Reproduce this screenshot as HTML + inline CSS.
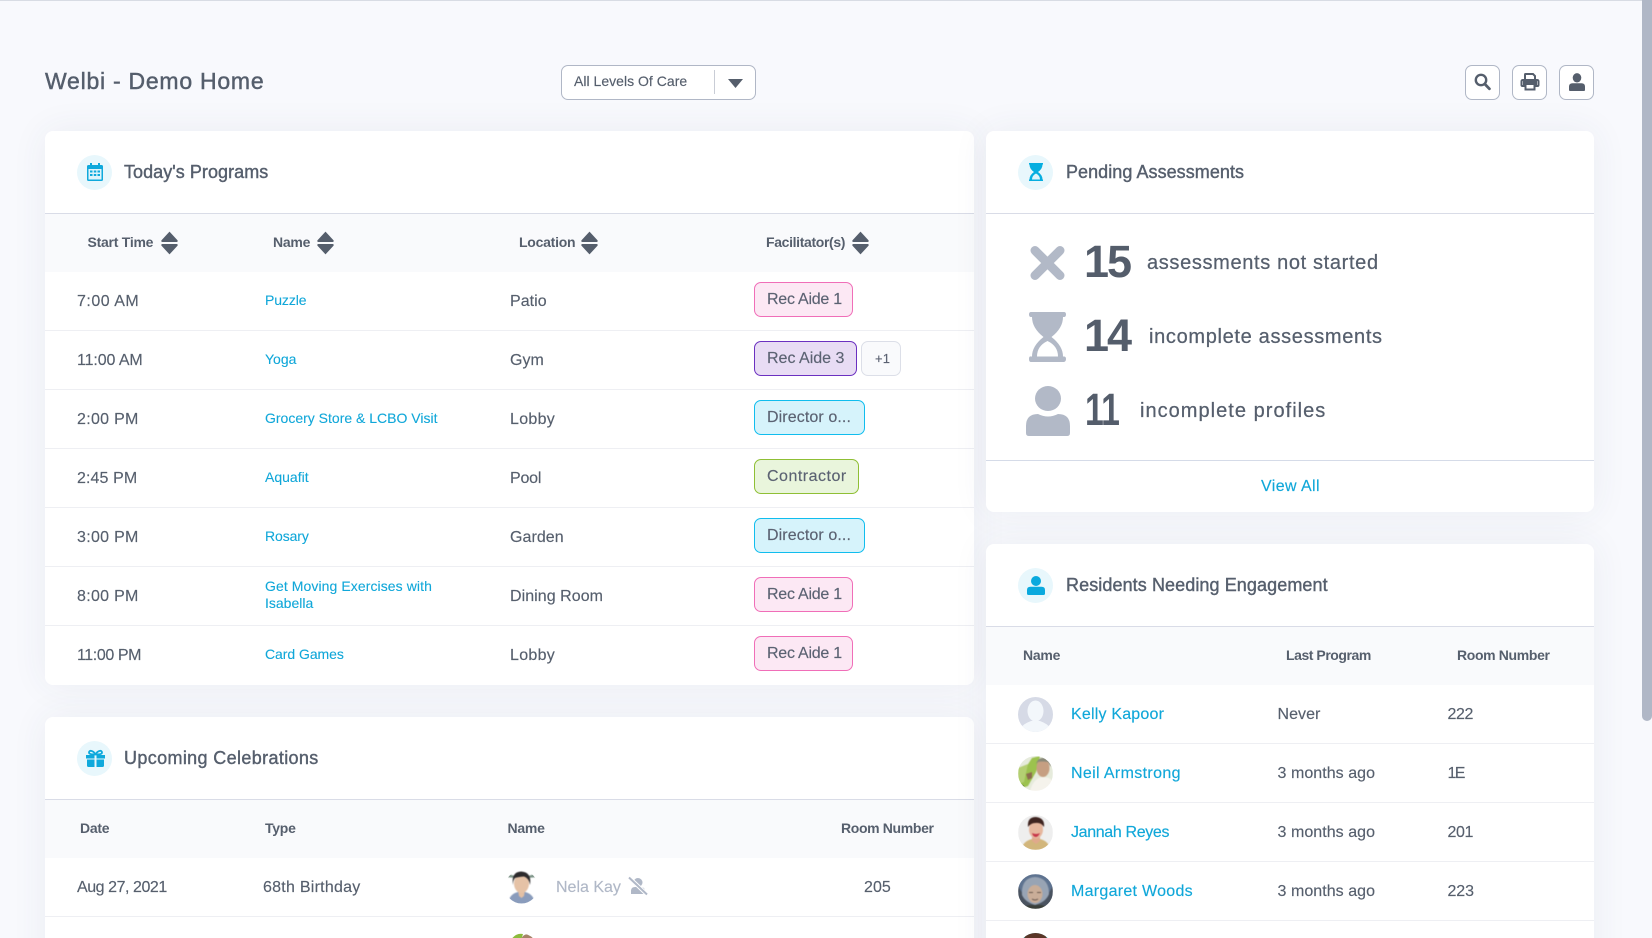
<!DOCTYPE html>
<html lang="en"><head><meta charset="utf-8"><title>Welbi - Demo Home</title>
<style>
html,body{margin:0;padding:0;width:1652px;height:938px;overflow:hidden;background:#f8f9fd}
body{position:relative;font-family:"Liberation Sans",sans-serif;color:#555e6c}
.top{position:absolute;left:0;top:0;width:1652px;height:1px;background:#d8dce4}
.sb{position:absolute;left:1642px;top:0;width:10px;height:721px;background:#b0b7c6;border-radius:0 0 5px 5px}
.card{position:absolute;background:#fff;border-radius:8px;box-shadow:0 0 36px rgba(60,70,100,.07);overflow:hidden}
.hb{position:absolute;left:0;right:0;height:1px;background:#d9dce7}
.th{position:absolute;left:0;right:0;background:#f9fafc}
.rb{position:absolute;left:0;right:0;height:1px;background:#eeeff3}
.t{position:absolute;white-space:nowrap;line-height:20px;height:20px}
.h{font-size:18px;letter-spacing:.05px;color:#565f6d;-webkit-text-stroke:.4px #565f6d}
.c{font-size:14px;font-weight:700;letter-spacing:-.25px;color:#565f6d}
.r{font-size:16px;letter-spacing:.05px;color:#565f6d;-webkit-text-stroke:.15px #565f6d}
.l{font-size:14px;letter-spacing:0;color:#10a7d9;-webkit-text-stroke:.1px #10a7d9}
.n{font-size:16px;letter-spacing:.2px;color:#10a7d9;-webkit-text-stroke:.15px #10a7d9}
.s{font-size:23px;letter-spacing:.75px;color:#555e6c;-webkit-text-stroke:.45px #555e6c}
.big{font-size:45px;font-weight:700;letter-spacing:-2px;line-height:50px;height:50px;color:#545d6b}
.lab{font-size:20px;letter-spacing:.65px;color:#565f6d;-webkit-text-stroke:.25px #565f6d}
.pill{position:absolute;box-sizing:border-box;height:35px;border-radius:7px;border:1.5px solid;font-size:16px;line-height:33px;padding-left:12px;letter-spacing:.1px;color:#5b6272;white-space:nowrap;-webkit-text-stroke:.15px #5b6272}
.pk{background:#fce8f4;border-color:#f06eb8;width:99px;letter-spacing:-.25px}
.pu{background:#e8dcf4;border-color:#6b30c0;width:103px;letter-spacing:0}
.bl{background:#d6f3fb;border-color:#10bdee;width:111px}
.gr{background:#e9f5dc;border-color:#8fbf35;width:105px;letter-spacing:.5px}
.ctr{background:#f9fafc;border-color:#dcdfe8;width:40px;padding-left:13px;font-size:13px}
.btn{position:absolute;top:65px;width:33px;height:33px;background:#fff;border:1px solid #b0b7c6;border-radius:7px}
.sel{position:absolute;left:561px;top:65px;width:193px;height:33px;background:#fff;border:1px solid #b0b7c6;border-radius:7px}
svg{position:absolute;display:block;overflow:visible}
.ph{filter:blur(.45px)}
</style></head><body>
<svg width="0" height="0" style="position:absolute"><defs>
<symbol id="sort" viewBox="0 0 17 24"><path d="M8.5.6 16.6 9.4Q17 11 15.6 11H1.4Q0 11 .4 9.4ZM8.5 23.4.4 14.6Q0 13 1.4 13H15.6Q17 13 16.6 14.6Z" fill="#555e6c"/></symbol>
<clipPath id="cc"><circle cx="17.5" cy="17.5" r="17.5"/></clipPath>
<clipPath id="cn"><circle cx="16.5" cy="17" r="16.5"/></clipPath>
</defs></svg>
<div class="top"></div><div class="sb"></div>

<div class="t s" style="left:45px;top:70.5px">Welbi - Demo Home</div>
<div class="sel"></div>
<div class="t" style="left:574px;top:71px;font-size:14px;letter-spacing:.02px;color:#555e6c;-webkit-text-stroke:.15px #555e6c">All Levels Of Care</div>
<div style="position:absolute;left:714px;top:70px;width:1px;height:24px;background:#c9cdd6"></div>
<svg style="left:728px;top:79px" width="15" height="9" viewBox="0 0 15 9"><path d="M0 0H15L7.5 9Z" fill="#555e6c"/></svg>

<div class="btn" style="left:1465px"><svg style="left:8px;top:7px" width="17" height="18" viewBox="0 0 17 18"><circle cx="7" cy="7" r="5.2" fill="none" stroke="#555e6c" stroke-width="2.4"/><path d="M10.8 11 15.4 15.8" stroke="#555e6c" stroke-width="2.8" stroke-linecap="round"/></svg></div>
<div class="btn" style="left:1512px"><svg style="left:7.5px;top:7px" width="18" height="18" viewBox="0 0 18 18"><path d="M4 7V1.5Q4 1 4.5 1H12L14 3V7M4 13H1.5Q.5 13 .5 12V8.5Q.5 7 2 7H16Q17.5 7 17.5 8.5V12Q17.5 13 16.5 13H14" fill="none" stroke="#555e6c" stroke-width="2"/><path d="M2 7.5H16V12.5H14V10.5H4V12.5H2Z" fill="#555e6c"/><rect x="4.5" y="11" width="9" height="5.5" fill="none" stroke="#555e6c" stroke-width="2"/></svg></div>
<div class="btn" style="left:1559px"><svg style="left:9px;top:7px" width="16" height="19" viewBox="0 0 16 19"><ellipse cx="8" cy="4.8" rx="4.3" ry="4.7" fill="#555e6c"/><path d="M0 17V13.5Q0 10.2 3.5 10.2H12.5Q16 10.2 16 13.5V17Q16 18 15 18H1Q0 18 0 17Z" fill="#555e6c"/></svg></div>

<!-- Today's Programs -->
<div class="card" style="left:45px;top:131px;width:929px;height:554px">
<div class="hb" style="top:82px"></div>
<div class="th" style="top:83px;height:58px"></div>
<div class="rb" style="top:199px"></div><div class="rb" style="top:258px"></div><div class="rb" style="top:317px"></div><div class="rb" style="top:376px"></div><div class="rb" style="top:435px"></div><div class="rb" style="top:494px"></div>
</div>
<svg style="left:77px;top:155px" width="35" height="35"><circle cx="17.5" cy="17.5" r="17.5" fill="#e8f7fc"/></svg>
<svg style="left:87px;top:163px" width="16" height="18" viewBox="0 0 16 18"><path d="M3 0H5V2H11V0H13V2H14.5Q16 2 16 3.5V16.5Q16 18 14.5 18H1.5Q0 18 0 16.5V3.5Q0 2 1.5 2H3Z" fill="#0fa9dc"/><rect x="1.5" y="6" width="13" height="10.5" fill="#dff4fb"/><g fill="#0fa9dc"><rect x="3" y="7.5" width="2.5" height="2"/><rect x="6.8" y="7.5" width="2.5" height="2"/><rect x="10.5" y="7.5" width="2.5" height="2"/><rect x="3" y="11" width="2.5" height="2"/><rect x="6.8" y="11" width="2.5" height="2"/><rect x="10.5" y="11" width="2.5" height="2"/></g></svg>
<div class="t h" style="left:124px;top:162px">Today's Programs</div>

<div class="t c" style="left:87.5px;top:232px">Start Time</div><svg style="left:161px;top:231px" width="17" height="24"><use href="#sort"/></svg>
<div class="t c" style="left:273px;top:232px">Name</div><svg style="left:317px;top:231px" width="17" height="24"><use href="#sort"/></svg>
<div class="t c" style="left:519px;top:232px">Location</div><svg style="left:581px;top:231px" width="17" height="24"><use href="#sort"/></svg>
<div class="t c" style="left:766px;top:232px;letter-spacing:-.35px">Facilitator(s)</div><svg style="left:852px;top:231px" width="17" height="24"><use href="#sort"/></svg>

<div class="t r" style="left:77px;top:292px;letter-spacing:.5px">7:00 AM</div><a class="t l" style="left:265px;top:290px;letter-spacing:-.1px">Puzzle</a><div class="t r" style="left:510px;top:292px">Patio</div><div class="pill pk" style="left:754px;top:282px">Rec Aide 1</div>
<div class="t r" style="left:77px;top:351px;letter-spacing:-.1px">11:00 AM</div><a class="t l" style="left:265px;top:349px">Yoga</a><div class="t r" style="left:510px;top:351px">Gym</div><div class="pill pu" style="left:754px;top:341px">Rec Aide 3</div><div class="pill ctr" style="left:861px;top:341px">+1</div>
<div class="t r" style="left:77px;top:410px;letter-spacing:.3px">2:00 PM</div><a class="t l" style="left:265px;top:408px">Grocery Store &amp; LCBO Visit</a><div class="t r" style="left:510px;top:410px;letter-spacing:.3px">Lobby</div><div class="pill bl" style="left:754px;top:400px">Director o...</div>
<div class="t r" style="left:77px;top:469px;letter-spacing:.1px">2:45 PM</div><a class="t l" style="left:265px;top:467px">Aquafit</a><div class="t r" style="left:510px;top:469px;letter-spacing:-.2px">Pool</div><div class="pill gr" style="left:754px;top:459px">Contractor</div>
<div class="t r" style="left:77px;top:528px;letter-spacing:.3px">3:00 PM</div><a class="t l" style="left:265px;top:526px;letter-spacing:-.1px">Rosary</a><div class="t r" style="left:510px;top:528px">Garden</div><div class="pill bl" style="left:754px;top:518px">Director o...</div>
<div class="t r" style="left:77px;top:587px;letter-spacing:.3px">8:00 PM</div><a class="t l" style="left:265px;top:576px;letter-spacing:.08px">Get Moving Exercises with</a><a class="t l" style="left:265px;top:593px">Isabella</a><div class="t r" style="left:510px;top:587px">Dining Room</div><div class="pill pk" style="left:754px;top:577px">Rec Aide 1</div>
<div class="t r" style="left:77px;top:646px;letter-spacing:-.4px">11:00 PM</div><a class="t l" style="left:265px;top:644px;letter-spacing:-.05px">Card Games</a><div class="t r" style="left:510px;top:646px;letter-spacing:.3px">Lobby</div><div class="pill pk" style="left:754px;top:636px">Rec Aide 1</div>

<!-- Upcoming Celebrations -->
<div class="card" style="left:45px;top:717px;width:929px;height:260px">
<div class="hb" style="top:82px"></div>
<div class="th" style="top:83px;height:58px"></div>
<div class="rb" style="top:199px"></div>
</div>
<svg style="left:77px;top:741px" width="35" height="35"><circle cx="17.5" cy="17.5" r="17.5" fill="#e8f7fc"/></svg>
<svg style="left:86px;top:750px" width="19" height="17" viewBox="0 0 19 17"><path d="M9.5 4.5C7 0 3 0 3 2.5 3 4 5 4.5 9.5 4.5ZM9.5 4.5C12 0 16 0 16 2.5 16 4 14 4.5 9.5 4.5Z" fill="none" stroke="#0fa9dc" stroke-width="1.8"/><path d="M0 5H8.5V8.5H0ZM10.5 5H19V8.5H10.5ZM1 9.5H8.5V17H2.5Q1 17 1 15.5ZM10.5 9.5H18V15.5Q18 17 16.5 17H10.5Z" fill="#0fa9dc"/></svg>
<div class="t h" style="left:124px;top:748px;letter-spacing:.36px">Upcoming Celebrations</div>
<div class="t c" style="left:80px;top:818px">Date</div><div class="t c" style="left:265px;top:818px">Type</div><div class="t c" style="left:507.5px;top:818px">Name</div><div class="t c" style="left:841px;top:818px;letter-spacing:-.35px">Room Number</div>
<div class="t r" style="left:77px;top:878px;letter-spacing:-.45px">Aug 27, 2021</div><div class="t r" style="left:263px;top:878px;letter-spacing:.25px">68th Birthday</div><div class="t r" style="left:864px;top:878px">205</div>
<svg style="left:505px;top:870px" width="33" height="34"><g clip-path="url(#cn)"><g class="ph"><rect width="33" height="34" fill="#fff"/><path d="M0 3 10 6 10 8 0 7ZM33 3 23 6 23 8 33 7Z" fill="#7d9488"/><path d="M3 34Q4 24 13 22L20 22Q29 24 30 34Z" fill="#8a9cbc"/><path d="M13 20H20L19 26 16.5 28 14 26Z" fill="#e2bfa4"/><ellipse cx="16.5" cy="13.5" rx="7.5" ry="9.5" fill="#e5c2a6"/><path d="M8 15Q6 2 16 1.5 27 2 25 15 24 8 19 6.5 13 7 10 8 8 10 8 15Z" fill="#2c2a2c"/></g></g></svg>
<div class="t r" style="left:556px;top:878px;color:#b0b8c7;-webkit-text-stroke:.15px #b0b8c7;letter-spacing:0">Nela Kay</div>
<svg style="left:628px;top:877px" width="20" height="18" viewBox="0 0 20 18"><circle cx="10" cy="5.5" r="4.5" fill="#b0b8c7"/><path d="M3 17V14Q3 10 7 10H12Q17 10 17 14V17Z" fill="#b0b8c7"/><path d="M1 .5 19 17.5" stroke="#fff" stroke-width="4"/><path d="M1 .5 19 17.5" stroke="#b0b8c7" stroke-width="2"/></svg>
<svg style="left:505px;top:933px" width="33" height="34"><g clip-path="url(#cn)"><rect width="33" height="34" fill="#fff"/><path d="M4 10Q10-1 18 1L14 14Z" fill="#8cbb3c"/><ellipse cx="23" cy="11" rx="8" ry="10" fill="#a68468"/></g></svg>

<!-- Pending Assessments -->
<div class="card" style="left:986px;top:131px;width:608px;height:381px">
<div class="hb" style="top:82px"></div>
<div class="hb" style="top:329px;background:#d5dbe8"></div>
</div>
<svg style="left:1018px;top:155px" width="35" height="35"><circle cx="17.5" cy="17.5" r="17.5" fill="#e8f7fc"/></svg>
<svg style="left:1029px;top:163px" width="14" height="18" viewBox="0 0 14 18"><path d="M0 0H14V1.5H13.5Q13.5 6 9 9 13.5 12 13.5 16.5H14V18H0V16.5H.5Q.5 12 5 9 .5 6 .5 1.5H0Z" fill="#06aee0"/><path d="M3 16.5Q3 12.5 7 10.5 11 12.5 11 16.5Z" fill="#dff4fb"/></svg>
<div class="t h" style="left:1066px;top:162px">Pending Assessments</div>

<svg style="left:1030px;top:246px" width="35" height="34" viewBox="0 0 35 34"><path d="M5 4.5 30 29.5M30 4.5 5 29.5" stroke="#b2b9c7" stroke-width="9" stroke-linecap="round"/></svg>
<div class="t big" style="left:1084px;top:237px">15</div>
<div class="t lab" style="left:1147px;top:252.5px">assessments not started</div>

<svg style="left:1029px;top:312px" width="37" height="50" viewBox="0 0 37 50"><path d="M2 0H35Q37 0 37 2.5T35 5H34Q34 16 22.5 25 34 34 34 44.5H35Q37 44.5 37 47T35 50H2Q0 50 0 47T2 44.5H3Q3 34 14.5 25 3 16 3 5H2Q0 5 0 2.5T2 0Z" fill="#b2b9c7"/><path d="M8 44.5Q8 34 18.5 29 29 34 29 44.5Z" fill="#fff"/></svg>
<div class="t big" style="left:1084px;top:311px">14</div>
<div class="t lab" style="left:1149px;top:326.5px;letter-spacing:.67px">incomplete assessments</div>

<svg style="left:1026px;top:386px" width="44" height="50" viewBox="0 0 44 50"><ellipse cx="22" cy="12.5" rx="13" ry="12.5" fill="#b2b9c7"/><path d="M0 47V40Q0 28 12 28 22 33 32 28 44 28 44 40V47Q44 50 41 50H3Q0 50 0 47Z" fill="#b2b9c7"/></svg>
<div class="t big" style="left:1085px;top:385px;letter-spacing:-1px;transform:scaleX(.75);transform-origin:0 50%">11</div>
<div class="t lab" style="left:1140px;top:400.5px;letter-spacing:1.03px">incomplete profiles</div>

<a class="t" style="left:1261px;top:476.5px;font-size:16px;letter-spacing:.4px;color:#10a7d9;-webkit-text-stroke:.15px #10a7d9">View All</a>

<!-- Residents -->
<div class="card" style="left:986px;top:544px;width:608px;height:440px">
<div class="hb" style="top:82px"></div>
<div class="th" style="top:83px;height:58px"></div>
<div class="rb" style="top:199px"></div><div class="rb" style="top:258px"></div><div class="rb" style="top:317px"></div><div class="rb" style="top:376px"></div>
</div>
<svg style="left:1018px;top:568px" width="35" height="35"><circle cx="17.5" cy="17.5" r="17.5" fill="#e8f7fc"/></svg>
<svg style="left:1027px;top:576px" width="18" height="19" viewBox="0 0 18 19"><ellipse cx="9" cy="5" rx="5" ry="5" fill="#0aa9de"/><path d="M0 17.5V14Q0 10.8 3.5 10.8H14.5Q18 10.8 18 14V17.5Q18 19 16.5 19H1.5Q0 19 0 17.5Z" fill="#0aa9de"/></svg>
<div class="t h" style="left:1066px;top:575px;letter-spacing:.09px">Residents Needing Engagement</div>
<div class="t c" style="left:1023px;top:645px">Name</div><div class="t c" style="left:1286px;top:645px;letter-spacing:-.45px">Last Program</div><div class="t c" style="left:1457px;top:645px;letter-spacing:-.35px">Room Number</div>

<svg style="left:1018px;top:697px" width="35" height="35"><g clip-path="url(#cc)"><rect width="35" height="35" fill="#d6dae6"/><ellipse cx="17.5" cy="14" rx="8" ry="10.5" fill="#f3f7fb"/><path d="M3 35V31Q5 27 13 24H22Q30 27 32 31V35Z" fill="#f3f7fb"/></g></svg>
<a class="t n" style="left:1071px;top:705px;letter-spacing:.2px">Kelly Kapoor</a><div class="t r" style="left:1277.5px;top:705px">Never</div><div class="t r" style="left:1447.5px;top:705px;letter-spacing:-.4px">222</div>

<svg style="left:1018px;top:756px" width="35" height="35"><g clip-path="url(#cc)"><g class="ph"><rect width="35" height="35" fill="#e6ebdc"/><path d="M0 24 14 2 22 0 18 16 10 30 4 32Z" fill="#9cc24e"/><path d="M0 12 10 8 6 26 0 28Z" fill="#b4cf72"/><path d="M8 18 14 16 14 22 10 24Z" fill="#8d6b4f"/><ellipse cx="25" cy="12" rx="6.5" ry="9" fill="#c69f82"/><path d="M18 8Q20 1 27 2 33 3 33 11L30 6Q24 5 20 6Z" fill="#8a8a7a"/><path d="M12 35Q15 23 24 21 33 21 35 26V35Z" fill="#f5f3ec"/><path d="M0 27 6 30 4 35H0Z" fill="#2d3a28"/></g></g></svg>
<a class="t n" style="left:1071px;top:764px;letter-spacing:.35px">Neil Armstrong</a><div class="t r" style="left:1277.5px;top:764px">3 months ago</div><div class="t r" style="left:1447.5px;top:764px;letter-spacing:-1.7px">1E</div>

<svg style="left:1018px;top:815px" width="35" height="35"><g clip-path="url(#cc)"><g class="ph"><rect width="35" height="35" fill="#eeeeee"/><path d="M3 35Q5 26 14 24H22Q31 26 32 35Z" fill="#d2b67c"/><path d="M14 20H22V26L18 29 14 26Z" fill="#e0a98c"/><ellipse cx="18" cy="14.5" rx="7" ry="9" fill="#e6b79e"/><path d="M10 12Q9 2 18 2 27 3 26 12 23 7 17 8 13 8 10 12Z" fill="#3f2420"/><path d="M14 18Q18 20 22 18 20 22 18 22 15 22 14 18Z" fill="#c8364a"/></g></g></svg>
<a class="t n" style="left:1071px;top:823px;letter-spacing:-.35px">Jannah Reyes</a><div class="t r" style="left:1277.5px;top:823px">3 months ago</div><div class="t r" style="left:1447.5px;top:823px;letter-spacing:-.4px">201</div>

<svg style="left:1018px;top:874px" width="35" height="35"><g clip-path="url(#cc)"><g class="ph"><rect width="35" height="35" fill="#4a5360"/><path d="M0 0H35V12L29 22H6L0 12Z" fill="#5e7390"/><path d="M4 21Q3 4 17 3 31 4 31 20 28 28 17 31 7 28 4 21Z" fill="#98a4b4"/><ellipse cx="17" cy="20" rx="7.5" ry="9" fill="#c9ad98"/><path d="M11 18.500H15M19 18.500H23M14 25Q17 27 20 25" stroke="#6b5a50" stroke-width="1" fill="none"/><path d="M4 35Q8 30 17 31 27 30 31 35Z" fill="#3a3f3a"/></g></g></svg>
<a class="t n" style="left:1071px;top:882px;letter-spacing:.28px">Margaret Woods</a><div class="t r" style="left:1277.5px;top:882px">3 months ago</div><div class="t r" style="left:1447.5px;top:882px;letter-spacing:-.1px">223</div>

<svg style="left:1018px;top:933px" width="35" height="35"><g clip-path="url(#cc)"><rect width="35" height="35" fill="#3ecad0"/><ellipse cx="17.5" cy="8" rx="12" ry="9" fill="#5a3526"/></g></svg>
</body></html>
